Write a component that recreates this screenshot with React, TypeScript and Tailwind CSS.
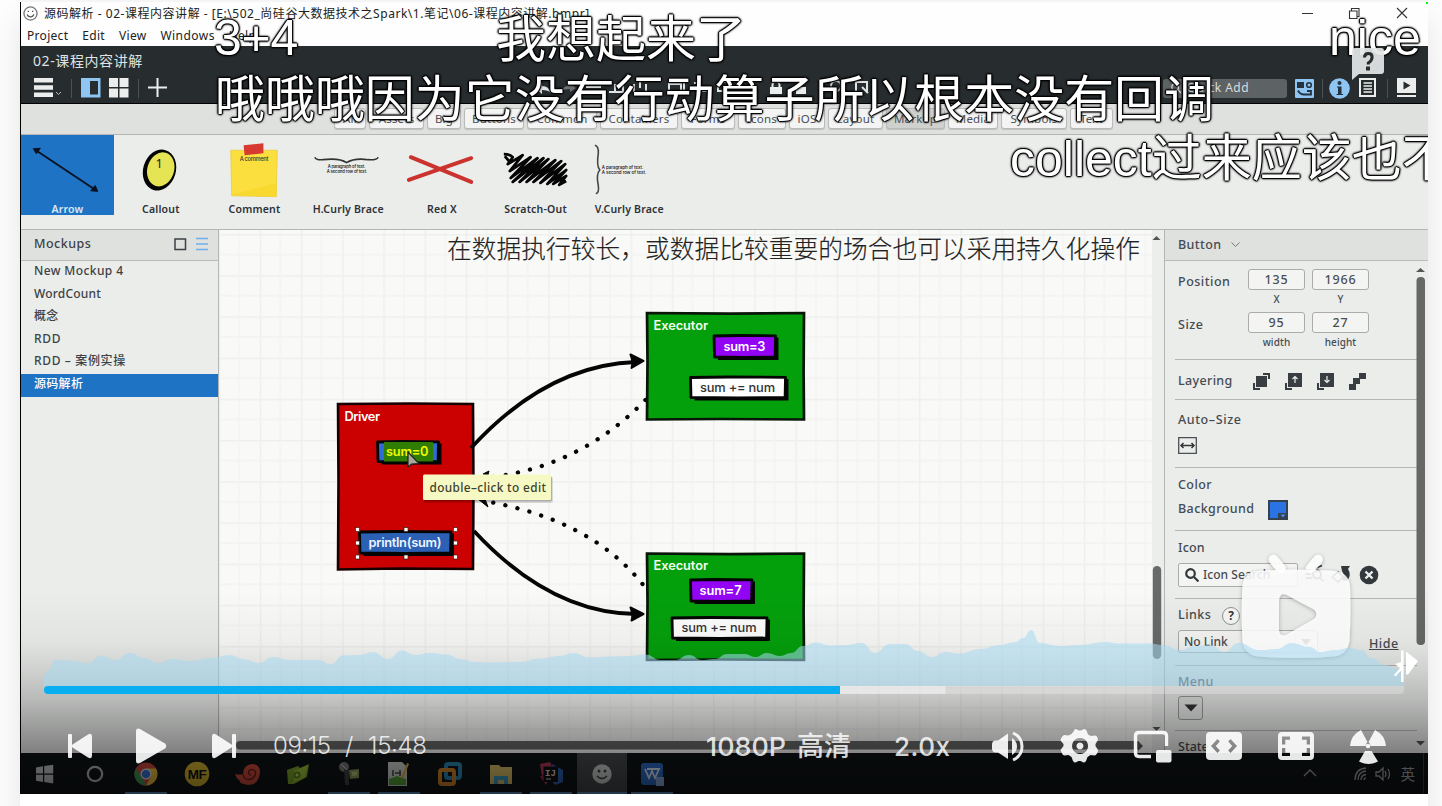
import React from 'react';

const UI = "font-['Noto_Sans','Noto_Sans_CJK_SC',sans-serif]";

const WAVE: [number, number][] = [
  [44, 675], [49, 670], [55, 660], [70, 660.5], [88, 663], [101, 655.5], [115, 660], [130, 653], [144, 658], [158, 663], [172, 659], [190, 661],
  [212, 658], [230, 655], [243, 659], [259, 663], [273, 657], [290, 660], [318, 660], [331, 664], [343, 655.5], [360, 655], [373, 652], [388, 659],
  [402, 650.5], [415, 655], [430, 653], [447, 654.5], [460, 659], [475, 662], [490, 662.5], [520, 662], [540, 658.5], [560, 656], [573, 653],
  [590, 657.5], [610, 656.5], [630, 656], [645, 654.5], [661, 660], [675, 660], [689, 655], [702, 660], [715, 659], [727, 654], [745, 654],
  [755, 657], [767, 653], [780, 656], [791, 653], [803, 646], [816, 642.5], [830, 645.5], [845, 645], [862, 643], [875, 653], [890, 644],
  [905, 644], [918, 651], [932, 657], [945, 652], [960, 653.5], [980, 649], [1000, 645], [1015, 642], [1023, 638], [1031, 630], [1040, 643],
  [1060, 646], [1080, 645], [1105, 642], [1120, 643.5], [1150, 643.5], [1163, 645], [1180, 650], [1195, 646], [1210, 645], [1225, 652],
  [1238, 643], [1260, 650], [1277, 649], [1291, 643], [1310, 647], [1320, 652], [1335, 650], [1350, 648], [1362, 650], [1371, 658],
  [1385, 665], [1395, 668], [1404, 673],
];

function wavePath(p: [number, number][]) {
  let d = `M${p[0][0]} 686 L${p[0][0]} ${p[0][1]}`;
  for (let i = 1; i < p.length; i++) {
    const mx = (p[i - 1][0] + p[i][0]) / 2;
    d += ` C${mx} ${p[i - 1][1]} ${mx} ${p[i][1]} ${p[i][0]} ${p[i][1]}`;
  }
  return d + ' L1404 686 Z';
}

function TitleBar() {
  return (
    <div className={`h-[44px] bg-[#fdfefd] text-[#222] ${UI}`}>
      <div className="flex h-[23px] items-center pl-[2px] text-[12px]">
        <svg width="15" height="15" viewBox="0 0 16 16" fill="none" stroke="#777" strokeWidth="1.4">
          <circle cx="8" cy="8" r="7" />
          <path d="M4.5 9c1 3.500 6 3.500 7 0M5.700 5v1.500M10.300 5v1.500" stroke="#555" />
        </svg>
        <span className="ml-[6px] whitespace-pre tracking-[0.53px]">源码解析 - 02-课程内容讲解 - [E:\502_尚硅谷大数据技术之Spark\1.笔记\06-课程内容讲解.bmpr]</span>
        <svg className="ml-auto mr-[19px]" width="108" height="14" viewBox="0 0 108 14" fill="none" stroke="#333" strokeWidth="1.100">
          <path d="M1 6.500h11M96 1l10 10M106 1l-10 10" />
          <path d="M48.500 4h7.500v7.500h-7.500zM50.500 4V1.500h7.500v8h-2" />
        </svg>
      </div>
      <div className="flex h-[21px] items-center gap-[14px] pl-[6px] text-[12px] tracking-[0.3px]">
        <span>Project</span><span>Edit</span><span>View</span><span className="tracking-[0.45px]">Windows</span><span>Help</span>
      </div>
    </div>
  );
}

function Sep({ className }: { className: string }) {
  return <div className={`h-[19px] w-px bg-[#4c5255] ${className}`} />;
}

function DarkHeader() {
  return (
    <div className={`h-[58px] border-b border-black bg-[#272c2f] text-[#dfe3e3] ${UI}`}>
      <div className="h-[32px] pl-[12px] text-[14px] leading-[29px] tracking-[0.6px]">02-课程内容讲解</div>
      <div className="flex h-[20px] items-center pl-[13px]">
        <svg width="28" height="20" viewBox="0 0 28 20"><path d="M0 0h19v4.500H0zM0 7.300h19v4.500H0zM0 14.600h19v4.500H0z" fill="#eceeee" /><path d="M22 14l2.500 2.500L27 14" stroke="#bbb" fill="none" /></svg>
        <Sep className="ml-[9px]" />
        <svg className="ml-[9px]" width="20" height="20"><path d="M0 0h19.500v19.500H0z" fill="#8fc5f3" /><path d="M9 3h8v13.500H9z" fill="#272c2f" /></svg>
        <svg className="ml-[8px]" width="20" height="20"><path d="M0 0h9v9H0zM10.500 0h9v9h-9zM0 10.500h9v9H0zM10.500 10.500h9v9h-9z" fill="#eceeee" /></svg>
        <Sep className="ml-[9px]" />
        <svg className="ml-[9px]" width="20" height="20"><path d="M0 9.500h19M9.500 0v19" stroke="#eceeee" strokeWidth="2" /></svg>
        <svg className="ml-[364px]" width="350" height="20" viewBox="530 78 350 20" fill="none">
          <path d="M549 93q-2-7-9-7v-4l-7 6 7 6v-4q6 0 9 3z" fill="#dfe3e3" />
          <path d="M559 91q4-6 9-5v-3l6 5-6 4v-3q-5 0-9 2z" fill="#6b7173" />
          <path d="M584 87h15M607 92h14v-7h-8v7M632 84v8h12v-8M638 82v6M667 84h12v8h-12zM682 83v11M692 83h5v-2M700 91h10M716 83v8h5M722 82h6v6M1 1" stroke="#dfe3e3" strokeWidth="2" />
          <path d="M768 87h12v7h-12z" fill="#eceeee" /><path d="M770.500 87v-2a3.500 3.500 0 0 1 7 0v2" stroke="#eceeee" strokeWidth="2" />
          <path d="M794 87h10v7h-10z" fill="#eceeee" />
          <path d="M816.500 78v19" stroke="#4c5255" />
          <circle cx="834" cy="86" r="5" stroke="#dfe3e3" strokeWidth="2" /><path d="M854 92V82h11v10M860 87l6 6" stroke="#dfe3e3" strokeWidth="2" />
        </svg>
        <div className="ml-auto flex h-[19px] w-[124px] items-center rounded-[3px] bg-[#5d6264] pl-[8px] text-[12px] text-[#dadddd]">
          <svg width="10" height="12" viewBox="0 0 12 12" fill="none" stroke="#ddd" strokeWidth="1.500"><circle cx="5" cy="5" r="4" /><path d="M8 8l4 4" /></svg>
          <span className="ml-[6px] tracking-[0.5px]">Quick Add</span>
        </div>
        <svg className="ml-[8px]" width="19" height="19"><rect width="19" height="19" rx="1" fill="#8fc5f3" /><path d="M2 3h7v6H2z" fill="#26333f" /><circle cx="14" cy="6" r="2.300" fill="none" stroke="#26333f" strokeWidth="1.600" /><path d="M3 11.500q2 4 6 4h4M12 12h4v3.500h-4" fill="none" stroke="#26333f" strokeWidth="1.800" /></svg>
        <Sep className="ml-[8px]" />
        <svg className="ml-[6px]" width="21" height="21"><circle cx="10.500" cy="10.500" r="10.300" fill="#8fc5f3" /><circle cx="10.500" cy="5" r="2" fill="#26333f" /><path d="M8 8.500h4.500V16H14v1H7.500v-1H9v-6.500H8z" fill="#26333f" /></svg>
        <svg className="ml-[9px]" width="18" height="20"><path d="M1 1h15v17H1z" fill="none" stroke="#eceeee" strokeWidth="2" /><path d="M4.500 5h8.500M4.500 8h8.500M4.500 11h8.500M4.500 14h8.500" stroke="#eceeee" strokeWidth="1.500" /></svg>
        <Sep className="ml-[10px]" />
        <svg className="ml-[9px] mr-[12px]" width="19" height="20"><path d="M0 0h19v15H0zM0 17h19v2H0z" fill="#eceeee" /><path d="M6.500 3.500l7 4-7 4z" fill="#272c2f" /></svg>
      </div>
    </div>
  );
}

const CATS: [string, string][] = [
  ['All', 'w-[32px]'], ['Assets', 'w-[55px]'], ['Big', 'w-[34px]'], ['Buttons', 'w-[60px]'], ['Common', 'w-[70px]'], ['Containers', 'w-[78px]'],
  ['Forms', 'w-[54px]'], ['Icons', 'w-[48px]'], ['iOS', 'w-[36px]'], ['Layout', 'w-[55px]'], ['Markup', 'w-[59px]'], ['Media', 'w-[50px]'],
  ['Symbols', 'w-[66px]'], ['Text', 'w-[43px]'],
];

function CategoryBar() {
  return (
    <div className={`flex h-[31px] gap-[3px] border-b border-[#b4b6b4] bg-[#dfe1df] pl-[313px] pt-[4px] ${UI}`}>
      {CATS.map(([t, w]) => (
        <div key={t} className={`${w} h-[21px] shrink-0 rounded-[3px] border border-[#b9bbb9] text-center text-[11.5px] leading-[19px] tracking-[0.2px] text-[#4a4e55] shadow-[0_1px_1px_rgba(0,0,0,0.15)] ${t === 'Markup' ? 'bg-[#cfd1cf]' : 'bg-[#f3f4f3]'}`}>{t}</div>
      ))}
    </div>
  );
}

const scratch = 'M1 2q6 0 9 3L5 12 20 3 7 19 28 5 8 26 35 6 10 30 41 6 17 30 46 7 24 30 53 8 31 30 59 9 38 31 63 12 45 32 64 18 51 32 64 24 57 33 64 29M2 4l5 6';

const RIBBON: [string, React.ReactNode][] = [
  ['Arrow', <svg key="a" width="93" height="79" viewBox="0 0 94 79"><path d="M15 15L75 55" stroke="#0a1020" strokeWidth="1.800" /><path d="M12.500 13.500l7-.5-4 5.500zM77.500 56.500l-7-.5 4.500-5.500z" fill="#0a1020" stroke="#0a1020" /></svg>],
  ['Callout', <svg key="c" width="93" height="79" viewBox="0 0 94 79"><g transform="rotate(17 46 35)"><ellipse cx="46" cy="35" rx="16.500" ry="21" fill="#050505" /><ellipse cx="47" cy="34" rx="13.500" ry="17.500" fill="#e4e455" /></g><text x="42" y="33" fontSize="13" fontFamily="Noto Sans" fill="#222">1</text></svg>],
  ['Comment', <svg key="m" width="93" height="79" viewBox="0 0 94 79"><path d="M23 15l47 0-1 47-45-1z" fill="#fbdf3f" stroke="#e9cb3c" strokeWidth=".8" /><path d="M24 60l45 2V48z" fill="#f9d92f" /><path d="M36 10l20-2v10l-19 2z" fill="#d63a30" /><text x="32" y="26" fontSize="5.800" textLength="29" fontFamily="Inter" fontWeight="500" fill="#333">A comment</text></svg>],
  ['H.Curly Brace', <svg key="h" width="93" height="79" viewBox="0 0 94 79" fill="none"><path d="M14 22q1 3 8 2.500 17-2 24 3 8-5 22-3 9 .5 10-2.500" stroke="#333" strokeWidth="1.600" /><g fontSize="4.300" fontFamily="Inter" fill="#111" fontWeight="500"><text x="27" y="32.500" textLength="38">A paragraph of text.</text><text x="26" y="37.500" textLength="41">A second row of text.</text></g></svg>],
  ['Red X', <svg key="r" width="93" height="79" viewBox="0 0 94 79"><path d="M16 22L77 47M77 23L14 45" stroke="#cb332e" strokeWidth="4" strokeLinecap="round" /></svg>],
  ['Scratch-Out', <svg key="s" width="93" height="79" viewBox="0 0 94 79"><path d={scratch} transform="translate(14 17)" fill="none" stroke="#050505" strokeWidth="2.800" strokeLinejoin="round" /></svg>],
  ['V.Curly Brace', <svg key="v" width="93" height="79" viewBox="0 0 94 79" fill="none"><path d="M13 10q4 1 3.500 8-2 13 1.500 17-4 4-1.500 16 1 7-2.500 8" stroke="#444" strokeWidth="1.600" /><g fontSize="4.500" fontFamily="Inter" fill="#111" fontWeight="500"><text x="20" y="33.500" textLength="42">A paragraph of text.</text><text x="20" y="39.500" textLength="45">A second row of text.</text></g></svg>],
];

function Ribbon() {
  return (
    <div className={`flex h-[95px] border-b border-[#b4b6b4] bg-[#ebedeb] ${UI}`}>
      {RIBBON.map(([t, icon]) => (
        <div key={t} className={`grid h-[80px] shrink-0 ${t === 'Arrow' ? 'w-[93px] bg-[#1e73c4] text-[#d7e9f8]' : 'w-[93.7px] text-[#2b3138]'}`}>
          <div className="col-start-1 row-start-1">{icon}</div>
          <div className="col-start-1 row-start-1 self-end text-center text-[10.5px] font-semibold leading-[12px] tracking-[0.2px]">{t}</div>
        </div>
      ))}
    </div>
  );
}

const PAGES: [string, string][] = [
  ['New Mockup 4', 'tracking-[0.4px]'], ['WordCount', 'tracking-[0.2px]'], ['概念', 'tracking-[0.2px]'], ['RDD', 'tracking-[0.7px]'], ['RDD – 案例实操', 'tracking-[0.65px]'], ['源码解析', 'tracking-[0.3px]'],
];

function MockupList() {
  return (
    <div className={`flex w-[198px] shrink-0 flex-col border-r border-[#b4b6b4] bg-[#ebedeb] text-[#3d4246] ${UI}`}>
      <div className="flex h-[31px] items-center border-b border-[#b9bbb9] bg-[#dfe1df] pl-[13px] pb-[2px]">
        <span className="text-[12.5px] font-medium tracking-[0.5px]">Mockups</span>
        <svg className="ml-auto mr-[10px]" width="34" height="14" fill="none"><path d="M1 2h10.500v10.500H1z" stroke="#3d4246" strokeWidth="1.500" /><path d="M22 1.500h12M22 7h12M22 12.500h12" stroke="#6eb1ea" strokeWidth="1.600" /></svg>
      </div>
      {PAGES.map(([t, tr], i) => (
        <div key={t} className={`pl-[13px] text-[12px] font-medium leading-[20px] ${tr} ${i === 5 ? 'h-[23px] bg-[#1e73c4] text-white' : 'h-[22.5px]'}`}>{t}</div>
      ))}
    </div>
  );
}

function Box({ x, y, w, h, fill, label, color, tx, tw, weight = 600 }: { x: number; y: number; w: number; h: number; fill: string; label: string; color: string; tx: number; tw: number; weight?: number }) {
  return (
    <g>
      <path d={`M${x + 4} ${y + 2}h${w - 1}v${h + 1}h${-w + 1}z`} fill="#050505" />
      <path d={`M${x} ${y + 0.5}L${x + w * 0.4} ${y}L${x + w} ${y + 0.3}L${x + w - 0.4} ${y + h}L${x + w * 0.5} ${y + h + 0.4}L${x + 0.5} ${y + h}Z`} fill={fill} stroke="#050505" strokeWidth="2.800" strokeLinejoin="round" />
      {label && <text x={tx} y={y + h / 2 + 4.700} textLength={tw} fontSize="12.800" fill={color} fontWeight={weight}>{label}</text>}
    </g>
  );
}

function Canvas() {
  return (
    <svg className="h-[523px] w-[933px] shrink-0 bg-[#f9faf8]" viewBox="219 230 933 523" fontFamily="Inter, Liberation Sans, sans-serif">
      <defs>
        <pattern id="grid" x="259.800" y="234" width="41.200" height="41.200" patternUnits="userSpaceOnUse">
          <path d="M.5 0v41.200M0 .5h41.200" stroke="#eef0ee" strokeWidth="2" />
          <path d="M20.600 0v41.200M0 20.600h41.200" stroke="#f2f3f1" strokeWidth="1.300" />
        </pattern>
      </defs>
      <rect x="219" y="230" width="933" height="523" fill="url(#grid)" />
      <text x="447" y="258" fontSize="24.700" textLength="693" fill="#222" fontWeight="300" stroke="#222" strokeWidth=".15" fontFamily="'Noto Sans CJK SC', sans-serif">在数据执行较长，或数据比较重要的场合也可以采用持久化操作</text>

      <path d="M338 404L410 403.500L473 404L473.500 490L473 569L400 568.500L338 569.500L338.500 480Z" fill="#cb0000" stroke="#160000" strokeWidth="2.600" />
      <text x="344.500" y="420.500" textLength="35.500" fontSize="12.800" fill="#fff" fontWeight="600">Driver</text>

      <g fill="none" stroke="#050505" strokeWidth="3.800">
        <path d="M471 448Q547 365 636 362" />
        <path d="M474 531Q550 613 636 614" />
      </g>
      <path d="M643.500 361l-13-6.500q3 7 1 13.500zM643.500 614l-13-6.500q3 7 1 13z" fill="#050505" stroke="#050505" strokeWidth="2" strokeLinejoin="round" />
      <g fill="none" stroke="#050505" strokeWidth="4.300" strokeLinecap="round" strokeDasharray=".1 12.300">
        <path d="M645.500 400Q581 466 492 477" />
        <path d="M642.500 584Q590 519 484 501" />
      </g>
      <path d="M478 499l10 8-3-8zM483 474l6-3-1 4z" fill="#050505" stroke="#050505" />

      {[312, 552.5].map((y) => (
        <g key={y}>
          <path d={`M647 ${y + 1}L730 ${y + 1.6}L804 ${y + 1}L803.600 ${y + 60}L804 ${y + 107.5}L720 ${y + 107}L647 ${y + 107.5}L647.500 ${y + 50}Z`} fill="#04a00c" stroke="#081508" strokeWidth="2.700" />
          <text x="653.500" y={y + 17.500} textLength="54.500" fontSize="12.800" fill="#f2fff2" fontWeight="600">Executor</text>
        </g>
      ))}
      <Box x={714} y={335.500} w={61.500} h={21.500} fill="#9304f5" label="sum=3" color="#fff" tx={723.500} tw={42} />
      <Box x={690.500} y={377} w={95} h={20.500} fill="#fdfdfd" label="sum += num" color="#333" tx={700} tw={75} weight={500} />
      <Box x={690.500} y={579.500} w={61.500} h={21.500} fill="#9304f5" label="sum=7" color="#fff" tx={699.500} tw={42} />
      <Box x={672} y={617.500} w={95} h={20.500} fill="#fdfdfd" label="sum += num" color="#333" tx={681.500} tw={75} weight={500} />

      <Box x={377.500} y={441.500} w={61} h={20} fill="#2f6ad8" label="" color="#fff" tx={386} tw={1} />
      <rect x="384" y="442" width="49" height="19.500" fill="#2f7d04" />
      <text x="386" y="456" textLength="42.500" fontSize="12.800" fill="#f0fa00" fontWeight="600">sum=0</text>
      <Box x={359.500} y={531.500} w={91.500} h={21.500} fill="#2b60b4" label="println(sum)" color="#eef4ff" tx={368.500} tw={73} />
      {[357.500, 406, 455.500].map((x) => [529.500, 543, 557].map((y) => (x === 406 && y === 543 ? null : (
        <rect key={`${x}-${y}`} x={x - 2} y={y - 2} width="4" height="4" fill="#fff" stroke="#321" strokeWidth=".7" />
      ))))}

      <rect x="424" y="477" width="129" height="26" rx="2" fill="#000" opacity=".12" />
      <rect x="423.500" y="476" width="128.500" height="25.500" rx="2" fill="#000" opacity=".2" />
      <rect x="423" y="474.500" width="128" height="25.500" rx="1.500" fill="#f6f9c4" />
      <text x="429.500" y="492" textLength="116.500" fontSize="11.800" fill="#3c3f2c" fontFamily="Noto Sans" fontWeight="500">double–click to edit</text>
      <path d="M408 452v15l3.500-3 7.500-.5z" fill="#aaa89a" stroke="#222" strokeWidth="1.200" />
      <rect x="236" y="741" width="904" height="8.500" rx="4" fill="#676a68" />
      <path d="M219 750.500h933" stroke="#fff" strokeWidth="1" />
    </svg>
  );
}

function CanvasScroll() {
  return (
    <svg className="h-[523px] w-[12px] shrink-0 bg-[#eceeec]" viewBox="1152 230 12 523">
      <path d="M1152.500 240l4-4 4 4zM1152.500 727l4 4 4-4z" fill="#555" />
      <rect x="1152.800" y="566" width="8.400" height="93" rx="4.200" fill="#676a68" />
    </svg>
  );
}

function Field({ v, label }: { v: string; label: string }) {
  return (
    <div className="w-[57px] text-center">
      <div className="h-[21px] rounded-[3px] border border-[#a9aca9] bg-[#f4f5f3] text-[12.5px] leading-[20px] tracking-[0.8px] text-[#4a4e52]">{v}</div>
      <div className="text-[10px] font-medium leading-[18px] tracking-[0.1px]">{label}</div>
    </div>
  );
}

function Inspector() {
  return (
    <div className={`flex w-[264px] shrink-0 flex-col overflow-hidden border-l border-[#b4b6b4] bg-[#ebedeb] text-[12.5px] font-medium text-[#454b52] ${UI}`}>
      <div className="flex h-[31px] shrink-0 items-center border-b border-[#b9bbb9] bg-[#dfe1df] pl-[13px] tracking-[0.4px]">
        Button
        <svg className="ml-[10px]" width="9" height="6" fill="none"><path d="M.5 .5l4 4 4-4" stroke="#777" /></svg>
      </div>
      <div className="flex h-[492px]">
        <div className="flex w-[252px] flex-col pl-[10px]">
          <div className="h-[99px] shrink-0 border-b border-[#b4b6b4] pl-[3px] pt-[8px]">
            <div className="flex h-[43px] gap-[7px]"><span className="w-[63px] leading-[26px] tracking-[0.5px]">Position</span><Field v="135" label="X" /><Field v="1966" label="Y" /></div>
            <div className="flex h-[43px] gap-[7px]"><span className="w-[63px] leading-[26px] tracking-[0.5px]">Size</span><Field v="95" label="width" /><Field v="27" label="height" /></div>
          </div>
          <div className="flex h-[40px] shrink-0 items-center border-b border-[#b4b6b4] pl-[3px] pt-[3px]">
            <span className="w-[75px] tracking-[0.35px]">Layering</span>
            <svg width="114" height="17" viewBox="0 0 114 17">
              <g fill="#393e42"><path d="M3 3h11v11H3zM0 10h2v5h5v2H0zM10 0h7v6h-2V2h-5zM35 0h14v14H35zM32 10h2v5h5v2h-7zM67 0h14v14H67zM64 10h2v5h5v2h-7zM106 0h7v6h-7zM100 5h7v6h-7zM96 11h7v6h-7z" /></g>
              <path d="M42 10V3.500M39.500 6L42 3.500 44.500 6M74 3v6.500M71.500 7L74 9.500 76.500 7" stroke="#eee" fill="none" strokeWidth="1.200" />
            </svg>
          </div>
          <div className="h-[68px] shrink-0 border-b border-[#b4b6b4] pl-[3px] pt-[10px]">
            <div className="leading-[19px] tracking-[0.6px]">Auto–Size</div>
            <svg className="mt-[8px]" width="19" height="17" fill="none"><path d="M.7.7h17.600v15.600H.7z" stroke="#4b5054" strokeWidth="1.300" /><path d="M3 8.500h13M5.500 6L3 8.500 5.500 11M13.500 6L16 8.500 13.500 11" stroke="#333" strokeWidth="1.500" /></svg>
          </div>
          <div className="h-[63px] shrink-0 border-b border-[#b4b6b4] pl-[3px] pt-[7px]">
            <div className="leading-[19px] tracking-[0.4px]">Color</div>
            <div className="flex h-[31px] items-center"><span className="w-[90px] tracking-[0.4px]">Background</span>
              <svg width="20" height="20"><rect x="1" y="1" width="18" height="18" fill="#2b72e2" stroke="#34414f" strokeWidth="2" /><path d="M10 13h9v6h-9z" fill="#34414f" /><path d="M12.500 14.500h5l-2.500 3z" fill="#4d8cf0" /></svg>
            </div>
          </div>
          <div className="h-[68px] shrink-0 border-b border-[#b4b6b4] pl-[3px] pt-[7px]">
            <div className="leading-[19px] tracking-[0.2px]">Icon</div>
            <div className="flex items-center pt-[6px]">
              <div className="flex h-[24px] w-[120px] items-center rounded-[2px] border border-[#a9aca9] bg-[#f4f5f3] pl-[6px] text-[12px]">
                <svg width="14" height="14" fill="none" stroke="#33383c" strokeWidth="2.200"><circle cx="5.500" cy="5.500" r="4.300" /><path d="M9 9l4.500 4.500" /></svg>
                <span className="ml-[4px] whitespace-nowrap tracking-[0.05px]">Icon Search</span>
              </div>
              <svg className="ml-[6px]" width="76" height="20" fill="none" stroke="#33383c" strokeWidth="2"><path d="M2 5h5M2 9h5M2 13h6" /><circle cx="13" cy="9.500" r="4" /><path d="M16 13l3.500 3.500M11 3.500l7-3M28 12l6-5 5 5-5 5z" strokeWidth="1.600" /><path d="M37 1h9l-2 3q4 6-1 12l-5-1q3-5 0-9z" fill="#33383c" stroke="none" /><circle cx="65" cy="10" r="9.300" fill="#33383c" stroke="none" /><path d="M61.500 6.500l7 7M68.500 6.500l-7 7" stroke="#eee" strokeWidth="2.400" /></svg>
            </div>
          </div>
          <div className="h-[67px] shrink-0 border-b border-[#b4b6b4] pl-[3px] pt-[7px]">
            <div className="flex h-[19px] items-center"><span className="w-[44px] tracking-[0.45px]">Links</span><span className="flex h-[18px] w-[18px] items-center justify-center rounded-full border border-[#8d908e] bg-[#f6f7f5] text-[12px] font-bold text-[#33383c]">?</span></div>
            <div className="flex items-center pt-[5px]">
              <div className="flex h-[23px] w-[140px] items-center rounded-[3px] border border-[#a9aca9] bg-[#f4f5f3] pl-[5px] text-[12px]">No Link<svg className="ml-auto" width="22" height="23"><path d="M0 0v23" stroke="#bbb" /><path d="M6 9h10l-5 6z" fill="#555" /></svg></div>
              <span className="ml-[51px] pt-[5px] text-[12.5px] tracking-[0.5px] underline">Hide</span>
            </div>
          </div>
          <div className="h-[65px] shrink-0 border-b border-[#b4b6b4] pl-[3px] pt-[7px]">
            <div className="leading-[18px] tracking-[0.3px]">Menu</div>
            <div className="mt-[5px] flex h-[24px] w-[25px] items-center justify-center rounded-[3px] border border-[#999c9a] bg-[#e6e8e6]"><svg width="14" height="8"><path d="M.5.5h13L7 7.500z" fill="#333" /></svg></div>
          </div>
          <div className="pl-[3px] pt-[7px] leading-[18px]">State</div>
        </div>
        <svg className="h-[492px] w-[11px] shrink-0" viewBox="1417 261 11 492" overflow="visible">
          <path d="M1416 272l4.500-4 4.500 4zM1416 741l4.500 4.500 4.500-4.500z" fill="#555" />
          <rect x="1416.500" y="277" width="8.500" height="368" rx="4" fill="#666866" />
        </svg>
      </div>
    </div>
  );
}

const TASKS: { on?: boolean; active?: boolean; el: React.ReactNode }[] = [
  { el: <path d="M4 6.500l7-1.200v7.200H4zM12.200 5.100l9-1.300v8.700h-9zM4 13.700h7v7.200l-7-1.200zM12.200 13.700h9v8.700l-9-1.300z" fill="#c9cccd" /> },
  { el: <circle cx="12" cy="13" r="7.200" fill="none" stroke="#b8bbbc" strokeWidth="2.200" /> },
  { on: true, el: <g><circle cx="13" cy="13" r="11.500" fill="#cf4a3c" /><path d="M3 7.200l5.500 8.500L13 24.500A11.500 11.500 0 0 1 3 7.200" fill="#3c9c56" /><path d="M13 24.500A11.500 11.500 0 0 0 23 7.500H13l5 8z" fill="#e8c23c" /><circle cx="13" cy="13" r="5.500" fill="#e8e8e8" /><circle cx="13" cy="13" r="4.300" fill="#3b74d8" /></g> },
  { el: <g><circle cx="13" cy="13" r="12.300" fill="#d8b830" /><text x="3.700" y="18" fontSize="13.500" fontWeight="bold" textLength="19" fontFamily="Liberation Sans" fill="#111">MF</text></g> },
  { el: <g><path d="M0 13q5 1 8 0 0-9 9-10 8 0 8 8-1 13-12 13Q4 23 5 20 1 17 0 13z" fill="#d04c3c" /><path d="M8 13q1 7 8 5 6-3 4-8-3-3-6 0-1 4 2 4" fill="none" stroke="#6d1c16" strokeWidth="1.400" /></g> },
  { el: <g><path d="M2 9l11-4 2 2 9-4-2 13-13 7H3z" fill="#7fa82c" /><path d="M9 10l14-6-3 12-11 5z" fill="#a2c83c" /><circle cx="12" cy="14" r="3.500" fill="#5e8a18" /><circle cx="12" cy="14" r="1.500" fill="#c8e070" /></g> },
  { on: true, el: <g><circle cx="8" cy="6" r="5" fill="#777a78" /><path d="M8 8l5 1v15H9z" fill="#404442" /><path d="M13 9l10-1v9l-9 1z" fill="#8c9a5c" /><path d="M16 11l5-.5v4l-5 .5z" fill="#b8c878" /><path d="M5 3l6 6" stroke="#ccc" /></g> },
  { on: true, el: <g><path d="M2 1h14l5 5v19H2z" fill="#d5d8d4" /><path d="M3 18l8-3 9 3v6H3z" fill="#58a838" /><path d="M7 9v6M9 12h6M14 9v6" stroke="#444" strokeWidth="1.500" /><path d="M15 17l6-15 2 1-6 15z" fill="#e0b040" /></g> },
  { el: <g fill="none" strokeWidth="4"><rect x="9" y="3" width="14" height="14" rx="2" stroke="#2d8ab8" /><rect x="3" y="9" width="14" height="14" rx="2" stroke="#d8882c" /></g> },
  { on: true, el: <g><path d="M2 4h9l2 2h11v17H2z" fill="#dfc26c" /><path d="M6 23v-8h14v8h-4v-4h-6v4z" fill="#3ba0c8" /></g> },
  { on: true, el: <g><path d="M2 3l10-2 4 8-12 6zM2 15l6 9 4-8z" fill="#b83858" /><path d="M14 3l11 6v12l-8 3-5-6z" fill="#2f62b8" /><path d="M5.500 5.500h14.500v15.500H5.500z" fill="#111" /><text x="7" y="15" fontSize="9" fontFamily="Liberation Mono" fontWeight="bold" fill="#ddd">IJ</text><path d="M8 18h5" stroke="#ddd" /></g> },
  { on: true, active: true, el: <g><circle cx="13" cy="13" r="9.700" fill="#d0d2d2" /><path d="M8 15q5 5 10 0" fill="none" stroke="#444" strokeWidth="1.500" /><circle cx="10" cy="10" r="1.500" fill="#444" /><circle cx="16" cy="10" r="1.500" fill="#444" /></g> },
  { on: true, el: <g><rect x="2" y="2" width="22" height="22" rx="3" fill="#2c6cc8" /><path d="M6 8l4 9 3-7 3 7 4-9H8" fill="none" stroke="#dce8f8" strokeWidth="1.800" /><path d="M17 16h8v9h-8z" fill="#8ba8e0" /></g> },
];

function Taskbar() {
  return (
    <div className="flex h-[41px] shrink-0 items-center overflow-hidden bg-[#0e1316]">
      <div className="-ml-[1px] flex">
        {TASKS.map((t, i) => (
          <div key={i} className={`flex h-[41px] w-[50.6px] flex-col items-center justify-between pt-[7.500px] ${t.active ? 'bg-[#45494d]' : ''}`}>
            <svg width="26" height="26" viewBox="0 0 26 26">{t.el}</svg>
            {t.on && <div className={`h-[2px] bg-[#5f90be] ${t.active ? 'w-full' : 'w-[42px]'}`} />}
          </div>
        ))}
      </div>
      <svg className="ml-auto" width="92" height="18" viewBox="0 0 92 18" fill="none" stroke="#a4a7a8" strokeWidth="1.300">
        <path d="M1 11l6-6 6 6" />
        <path d="M52 15q0-11 11-12M55 15q0-8 8-9M58 15q0-5 5-5.500M61 15q0-2 2-2" />
        <path d="M73 7h3l4-4v12l-4-4h-3zM82 6q2 3 0 6M85 4q3 5 0 10" />
      </svg>
      <span className="ml-[6px] mr-[8px] font-['Noto_Sans_CJK_SC'] text-[14.5px] text-[#a4a7a8]">英</span>
      <div className="mr-[4px] h-[41px] w-px bg-[#3a3d3f]" />
    </div>
  );
}

const danmu = "absolute whitespace-pre font-['Liberation_Sans','Noto_Sans_CJK_SC',sans-serif] text-[50px] leading-[60px] text-white [text-shadow:1px_0_1px_#000,0_1px_1px_#000,0_-1px_1px_#000,-1px_0_1px_#000,0_0_3px_#000,0_0_2px_#000,0_0_3px_#000]";

function Danmaku() {
  return (
    <>
      <div className={`${danmu} left-[193px] top-[6px] tracking-[-0.3px]`}>3+4</div>
      <div className={`${danmu} left-[475px] top-[8px]`}>我想起来了</div>
      <div className={`${danmu} left-[1308px] top-[6px]`}>nice</div>
      <div className={`${danmu} left-[194px] top-[68px] tracking-[-0.05px]`}>哦哦哦因为它没有行动算子所以根本没有回调</div>
      <div className={`${danmu} left-[989px] top-[127px]`}>collect过来应该也不</div>
    </>
  );
}

function PlayerOverlay() {
  return (
    <>
      <div className="absolute inset-x-0 bottom-0 h-[204px] bg-[linear-gradient(to_bottom,rgba(0,0,0,0)_0%,rgba(0,0,0,0.04)_25%,rgba(0,0,0,0.12)_40%,rgba(0,0,0,0.22)_54%,rgba(0,0,0,0.35)_68%,rgba(0,0,0,0.45)_79%,rgba(0,0,0,0.62)_100%)]" />
      <svg className="absolute left-0 top-0" width="1407" height="792" viewBox="21 2 1407 792">
        <defs>
          <linearGradient id="tv" x1="0" y1="0" x2="0" y2="1"><stop offset="0" stopColor="#fff" stopOpacity=".86" /><stop offset="1" stopColor="#fff" stopOpacity=".82" /></linearGradient>
          <filter id="sh" x="-20%" y="-20%" width="140%" height="140%"><feDropShadow dx="0" dy="1" stdDeviation="2" floodOpacity=".35" /></filter>
        </defs>
        <g filter="url(#sh)">
          <path d="M1273.500 559.500L1281 568.500M1318 559.500L1310.500 568.500" stroke="#fff" strokeOpacity=".9" strokeWidth="9.500" strokeLinecap="round" />
          <path fillRule="evenodd" d="M1258 571Q1296 568.500 1334 571Q1349 572 1350 587Q1351 614 1349.500 640Q1348 655 1333 656.500Q1296 659.500 1259 656.500Q1244 655 1242.500 640Q1241 614 1242.500 587Q1243 572 1258 571ZM1279 600V630Q1279 637 1286 635L1314 619Q1319 614 1314 609.500L1286 594.500Q1280 592.500 1279 600Z" fill="url(#tv)" />
        </g>
        <path d={wavePath(WAVE)} fill="#a6d9f2" fillOpacity=".55" />
        <path d="M840 686h564v4a4 4 0 0 1-4 4h-560z" fill="#fff" fillOpacity=".25" />
        <path d="M840 686h105.500v8H840z" fill="#fff" fillOpacity=".4" />
        <path d="M48 686h792v8H48a4 4 0 0 1 0-8z" fill="#08aeef" />
        <path d="M1401 650.500h2.600v31.500h-2.600zM1406 651.500L1418 661l-10 13.500h-2zM1401 662l-6 2 5 4-6 7 1.500 1.500 5.500-6z" fill="#fff" />
        <path d="M1355 48h26q3 0 3 3v20q0 3-3 3h-22l-7 6V51q0-3 3-3z" fill="#e4e6e6" fillOpacity=".93" />
        <path d="M1364.500 57.500q0-4 3.800-4t3.800 3.500-3.800 6v1.500" fill="none" stroke="#272c2f" strokeWidth="3" /><path d="M1366 66.500h4v4h-4z" fill="#272c2f" />
        <path d="M1426 2h2v2h-2z" fill="#0f0" />

        <g fill="#fff" fillOpacity=".9">
          <rect x="68" y="734" width="4" height="24" rx="1" />
          <path d="M72.500 744.500L88 734.500q4-2 4 2v19q0 4-4 2l-15.500-10q-2-1.500 0-3z" />
          <path d="M136 731.500q0-4 4-2.500l25 14.500q2.500 2.500 0 5L140 763q-4 1.500-4-2.500z" />
          <path d="M212 736.500q0-4 4-2l15.500 10q2 1.500 0 3l-15.500 10q-4 2-4-2z" /><rect x="232" y="734" width="4" height="24" rx="1" />

          <path d="M1008 733.500v25.500l-10-6.500h-2q-4 0-4-4v-4q0-4 4-4h2z" />
          <path d="M1012 738q5 3 5 8.500t-5 8.500z" />
          <path fillRule="evenodd" d="M1074 731q0-2 2-2l3 1.500h2l3-1.500q2 0 2.500 1.500l1.500 4 3 1.500 4-.5q1.500 0 2.500 2l.5 2.500-2.500 4v2l2.500 4q0 2-1 3.500-1 2-2.500 2l-4-.5-3 2-1.500 4q-1 1.500-2.500 1.500l-3-1.500h-2l-3 1.500q-1.500 0-2.500-1.500l-1.500-4-3-2-4 .5q-1.500 0-2.500-2l-1.500-3.500 3-4v-2l-3-3.500q0-2 1.500-3.500 1-2 2.500-2l4 .5 3-1.500zM1080 738a8 8 0 1 0 .1 0zM1080 742.500a3.500 3.500 0 1 1-.1 0z" />
          <rect x="1156" y="750" width="15.500" height="12.500" rx="2" />
          <path fillRule="evenodd" d="M1210 732h28q4 0 4 4v20q0 4-4 4h-28q-4 0-4-4v-20q0-4 4-4zM1217.500 739l-6.500 7 6.500 7 2.300-2.500-4-4.500 4-4.500zM1230.500 739l6.500 7-6.500 7-2.300-2.500 4-4.500-4-4.500z" />
          <path fillRule="evenodd" d="M1282 732h28q4 0 4 4v20q0 4-4 4h-28q-4 0-4-4v-20q0-4 4-4zM1282 736.500v8h3.300v-4.700h4.700v-3.300zM1302 736.500v3.300h4.700v4.700h3.300v-8zM1282 748v8h8v-3.300h-4.700V748zM1306.700 748v4.700h-4.700v3.300h8v-8z" />
          <path d="M1361 730l6.500 12q-2 2-2 4h-15.500q1-11 11-16zM1375 730l-6.500 12q2 2 2 4h15.500q-1-11-11-16zM1365 751h6.500l6.500 10.500q-9.500 5-19 0z" /><circle cx="1368" cy="746" r="2.300" />
        </g>
        <path d="M1013 733q9 4 9 13.500t-9 13.500" fill="none" stroke="#fff" strokeOpacity=".9" strokeWidth="3" />
        <path d="M1151 756.500h-12q-3.500 0-3.500-3.500v-17q0-3.500 3.500-3.500h24q3.500 0 3.500 3.500v10" fill="none" stroke="#fff" strokeOpacity=".92" strokeWidth="3.400" />
        <path d="M1138 741v10l5-5z" fill="#333" />
        <g fill="#fff" fillOpacity=".84" fontFamily="Inter, 'Noto Sans CJK SC', sans-serif">
          <text x="273" y="754" fontSize="24" fontWeight="300" textLength="58">09:15</text>
          <text x="345" y="754" fontSize="24" fontWeight="300">/</text>
          <text x="368" y="754" fontSize="24" fontWeight="300" textLength="59">15:48</text>
          <text x="706" y="755.500" fontSize="26" fontWeight="450" textLength="80" lengthAdjust="spacingAndGlyphs">1080P</text>
          <text x="797" y="755.500" fontSize="27" fontWeight="500" textLength="54">高清</text>
          <text x="894" y="755.500" fontSize="26" fontWeight="450" textLength="56">2.0x</text>
        </g>
      </svg>
    </>
  );
}

export default function App() {
  return (
    <div className="h-[806px] w-[1442px] overflow-hidden bg-[#fdfdfd] pl-[20px]">
      <div className="h-[840px] w-[1408px] bg-white shadow-[0_20px_28px_rgba(0,0,0,0.1)]">
        <div className="h-[2px] bg-[#f5f5f5]" />
        <div className="relative flex h-[792px] flex-col overflow-hidden border-l border-black">
          <TitleBar />
          <DarkHeader />
          <CategoryBar />
          <Ribbon />
          <div className="flex h-[523px] shrink-0">
            <MockupList />
            <Canvas />
            <CanvasScroll />
            <Inspector />
          </div>
          <Taskbar />
          <Danmaku />
          <PlayerOverlay />
        </div>
      </div>
    </div>
  );
}
